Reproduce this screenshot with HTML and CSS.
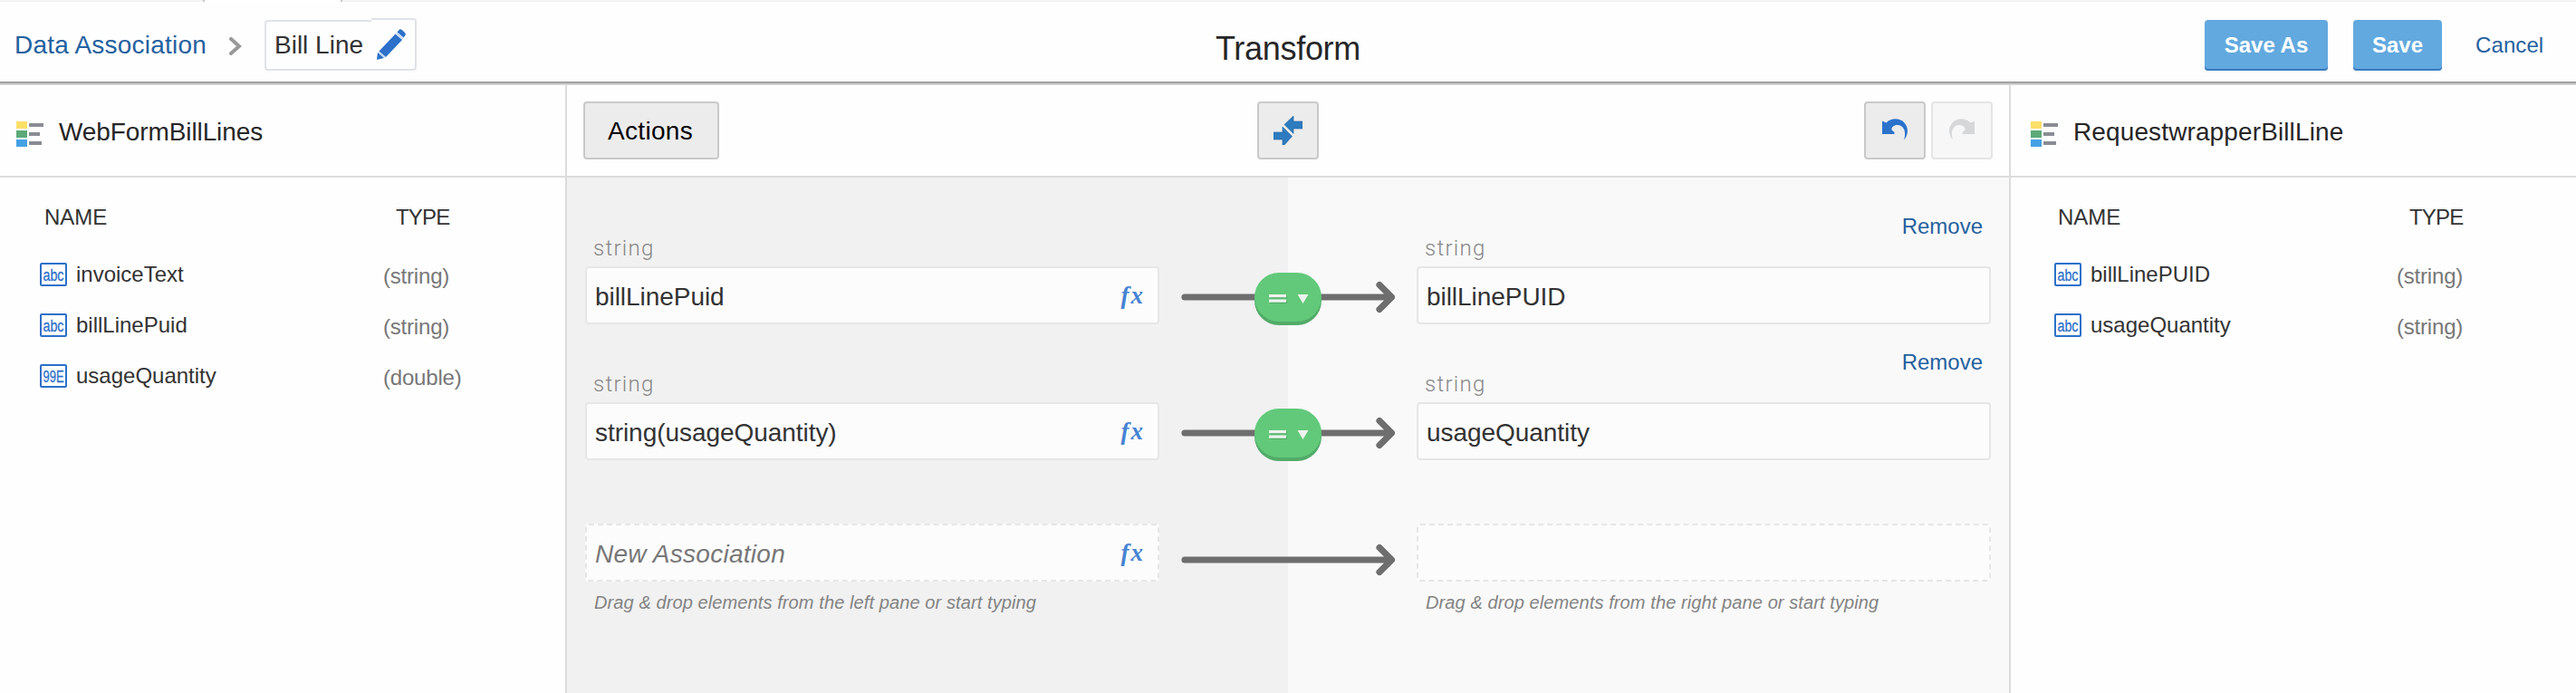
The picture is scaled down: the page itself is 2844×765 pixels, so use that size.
FILE: index.html
```
<!DOCTYPE html>
<html lang="en">
<head>
<meta charset="utf-8">
<title>Transform</title>
<link rel="stylesheet" href="styles.css">
</head>
<body>
<svg class="defs" aria-hidden="true">
  <symbol id="list" viewBox="0 0 30 28">
    <path fill="#fbdf69" d="M0 0h12v8H0z"/><path fill="#5caa78" d="M0 10h12v8H0z"/><path fill="#45a1e4" d="M0 20h12v8H0z"/>
    <path fill="#898d93" d="M14 2h16v4H14zM14 12h12v4H14zM14 22h14v4H14z"/>
  </symbol>
  <symbol id="shaft" viewBox="0 0 236 58">
    <path d="M4 27H231M219 13.5L232.500 27L219 40.500" fill="none" stroke="#6e6e6e" stroke-width="7.200" stroke-linecap="round" stroke-linejoin="round"/>
  </symbol>
  <symbol id="pill" viewBox="0 0 74 58">
    <rect y="4" width="74" height="54" rx="27" fill="#52ab68"/>
    <rect width="74" height="54" rx="27" fill="#62c97a"/>
    <path fill="#52ab68" d="M17 25.500h19v3H17zM17 31h19v3H17z"/>
    <path fill="#edf3ee" d="M16 24h19v3.300H16zM16 29.500h19v3.300H16zM47.500 24h12l-6 10z"/>
  </symbol>
</svg>

<div class="tabs"><span class="tab-open"></span></div>

<header class="header">
  <nav class="crumbs">
    <a class="link crumb-root">Data Association</a>
    <svg class="chevron" width="14" height="20" viewBox="0 0 14 20"><path d="M2 2L11 10L2 18" fill="none" stroke="#999" stroke-width="4" stroke-linecap="round"/></svg>
    <span class="crumb-name">Bill Line</span>
    <span class="crumb-edit">
      <svg width="32" height="34" viewBox="0 0 32 34"><g fill="#2c70c9"><path d="M22.500 3.500L25 .5Q26 0 27.500 .8L31 4Q32.300 5.500 31.500 7L29.500 9.500z"/><path d="M20.500 5.500L28 12L10 31L2.500 24.500z"/><path d="M1 26L8 32L0 34z"/></g><path d="M21.500 4.500L29 11M1.800 25.300L9 31.500" stroke="#b9d2ef" stroke-width="1.500"/></svg>
    </span>
  </nav>
  <h1 class="title">Transform</h1>
  <div class="commands">
    <button class="primary save-as">Save As</button>
    <button class="primary save">Save</button>
    <a class="link cancel">Cancel</a>
  </div>
</header>

<main class="workspace">
  <section class="pane">
    <h2 class="pane-head"><svg class="list-icon"><use href="#list"/></svg><span class="source-name">WebFormBillLines</span></h2>
    <div class="cols"><span class="col-name">NAME</span><span class="col-type">TYPE</span></div>
    <div class="item"><span class="item-name"><svg class="kind" width="30" height="26"><rect x="1" y="1" width="28" height="24" rx="1"/><text x="3.500" y="20" textLength="23" lengthAdjust="spacingAndGlyphs">abc</text></svg><span>invoiceText</span></span><span class="item-type">(string)</span></div>
    <div class="item"><span class="item-name"><svg class="kind" width="30" height="26"><rect x="1" y="1" width="28" height="24" rx="1"/><text x="3.500" y="20" textLength="23" lengthAdjust="spacingAndGlyphs">abc</text></svg><span>billLinePuid</span></span><span class="item-type">(string)</span></div>
    <div class="item"><span class="item-name"><svg class="kind" width="30" height="26"><rect x="1" y="1" width="28" height="24" rx="1"/><text x="3.500" y="20" textLength="23" lengthAdjust="spacingAndGlyphs">99E</text></svg><span>usageQuantity</span></span><span class="item-type">(double)</span></div>
  </section>

  <section class="center">
    <div class="toolbar">
      <button class="tool actions">Actions</button>
      <button class="tool"><svg width="32" height="32" viewBox="0 0 32 32"><path fill="#2d7cc0" stroke="#1f5f9f" stroke-width=".6" d="M32 6v8H22v5.500L12 9.500L22 0v6zM0 18h10v-6L20.500 22.500L12 32H10v-6H0z"/><path d="M11 11L21.500 21.500" stroke="#ececec" stroke-width="1.600"/></svg></button>
      <div class="history">
        <button class="tool"><svg class="turn" width="30" height="24" viewBox="0 0 30 24"><path fill="#2b72cb" d="M1 2.500L5.500 4.500C11 -1 20 -1 25 4C30.500 9.500 30 18 25 23.500C28 15 25 7 18 7C13 7 11 10 11.500 12.500L14.500 15V17H1z"/></svg></button>
        <button class="tool off"><svg class="turn" width="30" height="24" viewBox="0 0 30 24"><path transform="matrix(-1 0 0 1 30 0)" fill="#d5d7d9" d="M1 2.500L5.500 4.500C11 -1 20 -1 25 4C30.500 9.500 30 18 25 23.500C28 15 25 7 18 7C13 7 11 10 11.500 12.500L14.500 15V17H1z"/></svg></button>
      </div>
    </div>
    <div class="map">
      <div class="pair first">
        <div class="side"><span class="kind-label">string</span></div><div></div>
        <div class="side"><span class="kind-label">string</span><a class="link remove">Remove</a></div>
        <div class="field"><span>billLinePuid</span><span class="fx">fx</span></div>
        <div class="joint"><svg class="shaft"><use href="#shaft"/></svg><svg class="pill"><use href="#pill"/></svg></div>
        <div class="field"><span>billLinePUID</span></div>
      </div>
      <div class="pair">
        <div class="side"><span class="kind-label">string</span></div><div></div>
        <div class="side"><span class="kind-label">string</span><a class="link remove">Remove</a></div>
        <div class="field"><span>string(usageQuantity)</span><span class="fx">fx</span></div>
        <div class="joint"><svg class="shaft"><use href="#shaft"/></svg><svg class="pill"><use href="#pill"/></svg></div>
        <div class="field"><span>usageQuantity</span></div>
      </div>
      <div class="pair fresh">
        <div class="field"><span class="hint">New Association</span><span class="fx">fx</span></div>
        <div class="joint low"><svg class="shaft"><use href="#shaft"/></svg></div>
        <div class="field"></div>
        <p class="note">Drag &amp; drop elements from the left pane or start typing</p><div></div>
        <p class="note">Drag &amp; drop elements from the right pane or start typing</p>
      </div>
    </div>
  </section>

  <section class="pane target">
    <h2 class="pane-head"><svg class="list-icon"><use href="#list"/></svg><span class="target-name">RequestwrapperBillLine</span></h2>
    <div class="cols"><span class="col-name">NAME</span><span class="col-type">TYPE</span></div>
    <div class="item"><span class="item-name"><svg class="kind" width="30" height="26"><rect x="1" y="1" width="28" height="24" rx="1"/><text x="3.500" y="20" textLength="23" lengthAdjust="spacingAndGlyphs">abc</text></svg><span>billLinePUID</span></span><span class="item-type">(string)</span></div>
    <div class="item"><span class="item-name"><svg class="kind" width="30" height="26"><rect x="1" y="1" width="28" height="24" rx="1"/><text x="3.500" y="20" textLength="23" lengthAdjust="spacingAndGlyphs">abc</text></svg><span>usageQuantity</span></span><span class="item-type">(string)</span></div>
  </section>
</main>
</body>
</html>
```

FILE: styles.css
```
* { box-sizing: border-box; }
body {
  margin: 0;
  height: 765px;
  overflow: hidden;
  display: flex;
  flex-direction: column;
  background: #fefefe;
  color: #333;
  font: 24px/28px "Liberation Sans", Arial, sans-serif;
}
h1, h2, p { margin: 0; font-weight: 400; }
svg { display: block; flex: none; }
.defs { width: 0; height: 0; position: absolute; }
button { font: inherit; margin: 0; padding: 0; white-space: nowrap; }
.link { color: #24619f; }

.tabs { height: 2px; background: #f4f4f4; padding-left: 224px; flex: none; }
.tab-open { display: block; width: 154px; height: 2px; background: #fff; border: solid #c8c8c8; border-width: 0 2px; }

.header {
  flex: none;
  height: 92px;
  padding: 20px 15px 0 15px;
  display: grid;
  grid-template-columns: 1fr auto 1fr;
  align-items: start;
  line-height: 56px;
  background: linear-gradient(#8f918f, #b5b6b5 50%, #e6e6e6) bottom / 100% 4px no-repeat;
}
.crumbs { display: flex; align-items: center; font-size: 28px; height: 56px; }
.crumb-root { width: 238px; padding-left: 1px; letter-spacing: .22px; white-space: nowrap; }
.chevron { margin-top: 2px; }
.crumb-name {
  margin-left: 25px;
  width: 118px;
  height: 56px;
  line-height: 52px;
  padding-left: 9px;
  border: 2px solid #dfe3e8;
  border-right: 0;
  border-radius: 4px 0 0 4px;
}
.crumb-edit {
  width: 50px;
  height: 58px;
  margin-top: -2px;
  padding: 10px 0 0 6px;
  border: 2px solid #dfe3e8;
  border-left: 0;
  border-radius: 0 4px 4px 0;
}
.title { font-size: 36px; line-height: 63px; color: #262626; letter-spacing: -.3px; }
.commands { display: flex; justify-content: flex-end; }
.primary {
  height: 56px;
  border: 0;
  border-radius: 4px;
  background: #62a9df;
  box-shadow: inset 0 -2px #3b79bd;
  color: #fff;
  font-weight: 700;
  line-height: 56px;
}
.save-as { width: 136px; margin-right: 28px; }
.save { width: 98px; margin-right: 37px; }
.cancel { width: 96px; letter-spacing: .1px; }

.workspace { flex: 1; display: grid; grid-template-columns: 624px 1596px 624px; }
.pane-head {
  height: 102px;
  padding: 4px 0 0 18px;
  border-bottom: 2px solid #dcdcdc;
  display: flex;
  align-items: center;
  gap: 17px;
  font-size: 28px;
  color: #262626;
}
.list-icon { width: 30px; height: 28px; margin-top: 4px; }
.source-name { letter-spacing: -.1px; }
.target-name { letter-spacing: .12px; }
.cols, .item { display: grid; grid-template-columns: 423px 1fr; align-items: center; }
.cols { height: 79px; padding-top: 8px; }
.col-name { padding-left: 49px; }
.col-type { padding-left: 14px; letter-spacing: -.8px; }
.item { height: 56px; }
.item-name { display: flex; align-items: center; gap: 10px; padding-left: 44px; }
.item-type { color: #777; padding-top: 4px; letter-spacing: -.2px; }
.kind { overflow: visible; }
.kind rect { fill: #fff; stroke: #2b70c9; stroke-width: 2; }
.kind text { font: 19px "Liberation Sans", Arial, sans-serif; fill: #2b70c9; stroke: #2b70c9; stroke-width: .3; }
.target .pane-head { padding-left: 22px; }
.target .cols, .target .item { padding-left: 4px; grid-template-columns: 422px 1fr; }
.target .col-name { padding-left: 48px; }

.center { border: solid #dcdcdc; border-width: 0 2px; display: flex; flex-direction: column; }
.toolbar {
  height: 102px;
  padding: 18px 18px 0;
  border-bottom: 2px solid #dcdcdc;
  display: grid;
  grid-template-columns: 1fr auto 1fr;
  align-items: start;
}
.tool {
  width: 68px;
  height: 64px;
  border: 2px solid #c9c9c9;
  border-radius: 4px;
  background: #ececec;
  display: flex;
  align-items: center;
  justify-content: center;
}
.actions { width: 150px; padding: 2px 2px 0 0; font-size: 28px; color: #000; letter-spacing: .3px; }
.history { display: flex; justify-content: flex-end; gap: 6px; }
.off { background: #f7f7f7; border-color: #e5e5e5; }
.turn { margin-top: -2px; }

.map { flex: 1; padding-left: 20px; background: linear-gradient(90deg, #f1f1f1 50%, #f9f9f9 50%); }
.pair { display: grid; grid-template-columns: 634px 284px 634px; grid-template-rows: 86px 64px; }
.first { grid-template-rows: 98px 64px; }
.fresh { margin-top: 70px; grid-template-rows: 64px auto; }
.side { display: flex; justify-content: space-between; align-items: flex-end; padding: 0 9px 6px; }
.kind-label { font-family: Roboto, "Liberation Sans", sans-serif; font-weight: 300; color: #888; letter-spacing: 1.300px; }
.remove { margin-bottom: 24px; }
.field {
  height: 64px;
  padding: 4px 14px 0 9px;
  border: 2px solid #e6e6e6;
  border-radius: 4px;
  background: #fcfcfc;
  display: flex;
  justify-content: space-between;
  align-items: center;
  font-size: 28px;
  line-height: 32px;
  letter-spacing: -.05px;
}
.fresh .field { border-style: dashed; }
.hint { font-style: italic; color: #777; letter-spacing: .27px; }
.fx { font: italic 700 27px/32px "Liberation Serif", serif; color: #4583d3; letter-spacing: 2px; margin-top: -5px; }
.joint { display: grid; justify-items: center; align-content: start; padding-top: 7px; }
.joint > svg { grid-area: 1 / 1; }
.low { padding-top: 13px; }
.shaft { width: 236px; height: 58px; }
.pill { width: 74px; height: 58px; }
.note { font-size: 20px; font-style: italic; color: #838383; padding: 9px 0 0 10px; letter-spacing: .1px; }
```
